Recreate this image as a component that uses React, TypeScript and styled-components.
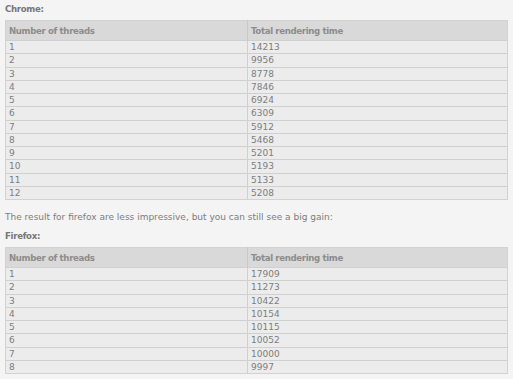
import React from "react";
import styled, { createGlobalStyle } from "styled-components";

const GlobalStyle = createGlobalStyle`
  html, body {
    margin: 0;
    padding: 0;
    background: #f4f4f4;
  }
  body {
    font-family: "DejaVu Sans", Verdana, sans-serif;
    font-size: 9px;
    color: #7d7d7d;
  }
`;

const CHROME_TIMES = [14213, 9956, 8778, 7846, 6924, 6309, 5912, 5468, 5201, 5193, 5133, 5208];
const FIREFOX_TIMES = [17909, 11273, 10422, 10154, 10115, 10052, 10000, 9997];

function ResultTable({ times }: { times: number[] }): JSX.Element {
  return (
    <Table>
      <colgroup>
        <col style={{ width: 242 }} />
        <col />
      </colgroup>
      <thead>
        <tr>
          <HeadCell>Number of threads</HeadCell>
          <HeadCell>Total rendering time</HeadCell>
        </tr>
      </thead>
      <tbody>
        {times.map((time, i) => (
          <tr key={i}>
            <Cell>{i + 1}</Cell>
            <Cell>{time}</Cell>
          </tr>
        ))}
      </tbody>
    </Table>
  );
}

function App(): JSX.Element {
  return (
    <Page>
      <GlobalStyle />
      <Heading>Chrome:</Heading>
      <ResultTable times={CHROME_TIMES} />
      <Paragraph>
        The result for firefox are less impressive, but you can still see a big gain:
      </Paragraph>
      <Heading>Firefox:</Heading>
      <ResultTable times={FIREFOX_TIMES} />
    </Page>
  );
}

export default App;

const Page = styled.div`
  padding: 2px 5px 0 5px;
  width: 503px;
`;

const Heading = styled.div`
  font-weight: bold;
  font-size: 8.6px;
  letter-spacing: -0.3px;
  color: #777;
  height: 18px;
  line-height: 14px;
`;

const Paragraph = styled.p`
  margin: 0;
  padding-top: 11px;
  height: 18px;
  line-height: 12px;
`;

const Table = styled.table`
  width: 503px;
  border-collapse: collapse;
  border: 1px solid #d2d2d2;
  table-layout: fixed;
`;

const HeadCell = styled.th`
  background: #d9d9d9;
  text-align: left;
  font-weight: bold;
  font-size: 8.6px;
  letter-spacing: -0.35px;
  color: #8c8c8c;
  height: 19px;
  padding: 0 3px;
  border-left: 1px solid #c8c8c8;
  &:first-child {
    border-left: none;
  }
`;

const Cell = styled.td`
  background: #ececec;
  height: 12.25px;
  line-height: 12px;
  padding: 0 3px;
  border-top: 1px solid #d0d0d0;
  border-left: 1px solid #d0d0d0;
  &:first-child {
    border-left: none;
  }
`;
